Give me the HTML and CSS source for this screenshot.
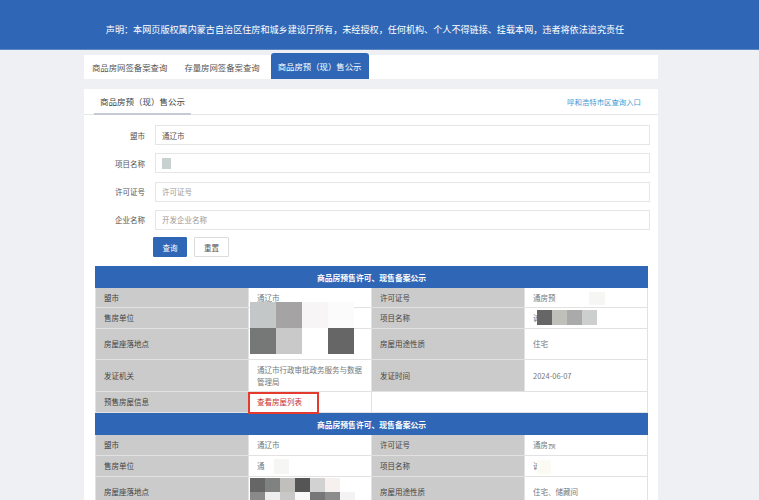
FILE: index.html
```html
<!DOCTYPE html>
<html lang="zh-CN">
<head>
<meta charset="utf-8">
<title>商品房预（现）售公示</title>
<link rel="stylesheet" href="styles.css">
</head>
<body>
<div class="banner"><p class="banner-text">声明：本网页版权属内蒙古自治区住房和城乡建设厅所有，未经授权，任何机构、个人不得链接、挂载本网，违者将依法追究责任</p></div>
<div class="page">
  <div class="tabs">
    <div class="tab">商品房网签备案查询</div>
    <div class="tab">存量房网签备案查询</div>
    <div class="tab active">商品房预（现）售公示</div>
  </div>
  <div class="card">
    <div class="card-head">
      <div class="card-title">商品房预（现）售公示</div>
      <a class="card-link">呼和浩特市区查询入口</a>
    </div>
    <div class="form">
      <div class="row"><label>盟市</label><div class="field"><input value="通辽市"></div></div>
      <div class="row"><label>项目名称</label><div class="field"><input value=""><span class="blur-dot"></span></div></div>
      <div class="row"><label>许可证号</label><div class="field"><input placeholder="许可证号"></div></div>
      <div class="row"><label>企业名称</label><div class="field"><input placeholder="开发企业名称"></div></div>
      <div class="btns"><button class="btn primary">查询</button><button class="btn">重置</button></div>
    </div>

    <table class="tbl">
      <colgroup><col class="ck"><col class="cv"><col class="ck"><col class="cv"></colgroup>
      <tr><th colspan="4">商品房预售许可、现售备案公示</th></tr>
      <tr class="h20"><td class="k">盟市</td><td class="v">通辽市</td><td class="k">许可证号</td><td class="v rel">通房预<span class="faint f1"></span></td></tr>
      <tr class="h21"><td class="k">售房单位</td><td class="v rel"><div class="mosaic m1"><i style="background:#c4c7c8"></i><i style="background:#a5a3a3"></i><i style="background:#f7f5f5"></i><i style="background:#fbfbfb"></i><i style="background:#767877"></i><i style="background:#c9c9c9"></i><i style="background:#ffffff"></i><i style="background:#666666"></i></div></td><td class="k">项目名称</td><td class="v rel">诚<div class="mosaic m2"><i style="background:#666666"></i><i style="background:#c0c0bb"></i><i style="background:#aaaaaa"></i><i style="background:#cdcfcf"></i></div></td></tr>
      <tr class="h31"><td class="k">房屋座落地点</td><td class="v"></td><td class="k">房屋用途性质</td><td class="v">住宅</td></tr>
      <tr class="h32"><td class="k">发证机关</td><td class="v">通辽市行政审批政务服务与数据管理局</td><td class="k">发证时间</td><td class="v">2024-06-07</td></tr>
      <tr class="h21"><td class="k">预售房屋信息</td><td class="v rel"><a class="red">查看房屋列表</a><span class="mark"></span></td><td class="blank" colspan="2"></td></tr>
    </table>

    <table class="tbl">
      <colgroup><col class="ck"><col class="cv"><col class="ck"><col class="cv"></colgroup>
      <tr><th colspan="4">商品房预售许可、现售备案公示</th></tr>
      <tr class="h21"><td class="k">盟市</td><td class="v">通辽市</td><td class="k">许可证号</td><td class="v rel">通房预<span class="faint f2"></span></td></tr>
      <tr class="h21"><td class="k">售房单位</td><td class="v rel">通<span class="faint f3"></span></td><td class="k">项目名称</td><td class="v rel">诚<span class="faint f4"></span></td></tr>
      <tr class="h31"><td class="k">房屋座落地点</td><td class="v rel"><div class="mosaic m3"><i style="background:#666666"></i><i style="background:#808282"></i><i style="background:#c0bfbc"></i><i style="background:#555555"></i><i style="background:#d2d2d2"></i><i style="background:#f6f0ee"></i><i style="background:#ffffff"></i><i style="background:#8a8a8a"></i><i style="background:#eeeeee"></i><i style="background:#c8c8c8"></i><i style="background:#f8f8f8"></i><i style="background:#777777"></i><i style="background:#8c8c8c"></i><i style="background:#f3f3f3"></i></div></td><td class="k">房屋用途性质</td><td class="v">住宅、储藏间</td></tr>
    </table>
  </div>
</div>
</body>
</html>
```

FILE: styles.css
```css
* { box-sizing: border-box; }
html, body { margin: 0; padding: 0; }
body {
  background: #eef0f3;
  font-family: "Noto Sans CJK SC", "Noto Sans", sans-serif;
  color: #333;
  overflow: hidden;
  height: 500px;
}
.banner {
  height: 50px;
  background: #2f67b6;
  border-bottom: 1px solid #5b86c4;
  padding: 21px 29px 0 0;
}
.banner-text {
  margin: 0;
  color: #fff;
  font-size: 9.1px;
  line-height: 16px;
  text-align: center;
  white-space: nowrap;
}
.page {
  width: 574px;
  margin-left: 84px;
}
.tabs {
  margin-top: 5px;
  height: 24px;
  background: #fff;
  display: flex;
  gap: 1px;
  font-size: 8.4px;
  color: #555;
}
.tab {
  padding: 0 8px;
  display: flex;
  align-items: center;
  height: 24px;
}
.tab.active {
  margin-left: 2px;
  margin-top: -2px;
  height: 26px;
  background: #2f67b6;
  color: #fff;
  border-radius: 3px 3px 0 0;
  padding: 0 7px;
}
.card {
  margin-top: 10px;
  background: #fff;
  padding-bottom: 20px;
}
.card-head {
  height: 26px;
  border-bottom: 1px solid #e6e6e6;
  display: flex;
  justify-content: space-between;
  align-items: stretch;
  padding: 0 17px 0 10px;
}
.card-title {
  font-size: 8.5px;
  color: #444;
  padding: 0 6px;
  display: flex;
  align-items: center;
  border-bottom: 2px solid #c5cbd3;
  margin-bottom: -1px;
}
.card-link {
  font-size: 7.4px;
  color: #3d9ad6;
  display: flex;
  align-items: center;
}
.form {
  padding: 10px 8px 0 0;
}
.row {
  display: flex;
  align-items: center;
  margin-bottom: 8.3px;
}
.row label {
  width: 61px;
  text-align: right;
  font-size: 7.5px;
  color: #555;
  margin-right: 10px;
}
.field {
  flex: 1;
  position: relative;
}
.field input {
  width: 100%;
  height: 20px;
  border: 1px solid #e6e6e6;
  padding: 0 6px;
  font-family: inherit;
  font-size: 7.5px;
  color: #555;
  outline: none;
  display: block;
}
.field input::placeholder { color: #999; }
.blur-dot {
  position: absolute;
  left: 7px;
  top: 5px;
  width: 9px;
  height: 11px;
  background: #c6d1d0;
}
.btns {
  display: flex;
  gap: 7px;
  margin-left: 69px;
  margin-top: -1px;
}
.btn {
  height: 20px;
  width: 35px;
  border: 1px solid #dcdcdc;
  background: #fff;
  font-family: inherit;
  font-size: 7.5px;
  color: #555;
  padding: 0;
  border-radius: 1px;
}
.btn.primary {
  background: #2f67b6;
  border-color: #2f67b6;
  color: #fff;
  width: 34px;
}
.tbl {
  margin-left: 11px;
  width: 552px;
  border-collapse: collapse;
  table-layout: fixed;
  font-size: 7.5px;
}
.form + .tbl { margin-top: 9px; }
.tbl col.ck { width: 153px; }
.tbl col.cv { width: 123px; }
.tbl th {
  background: #2f67b6;
  color: #fff;
  font-weight: bold;
  font-size: 7.8px;
  height: 21px;
  padding: 0;
  border: 1px solid #2f67b6;
}
.tbl td {
  border: 1px solid #e2e2e2;
  padding: 0 8px;
  line-height: 11.5px;
  vertical-align: middle;
}
.tbl td.k {
  background: #cbcbcb;
  color: #444;
}
.tbl td.v {
  background: #fff;
  color: #777;
}
.tbl td.blank { background: #fff; }
.h20 td { height: 20px; }
.h21 td { height: 21px; }
.h31 td { height: 31px; }
.h32 td { height: 32px; }
.rel { position: relative; }
.mosaic {
  position: absolute;
  display: grid;
}
.mosaic i { display: block; }
.m1 {
  left: 1px;
  top: -6px;
  grid-template-columns: repeat(4, 26px);
  grid-auto-rows: 26px;
}
.m2 {
  left: 12px;
  top: 2px;
  grid-template-columns: repeat(4, 15px);
  grid-auto-rows: 15px;
}
.m3 {
  left: 1px;
  top: 1px;
  grid-template-columns: repeat(7, 15px);
  grid-auto-rows: 14px;
}
.faint {
  position: absolute;
  display: block;
  background: #f6f6f4;
}
.f1 { left: 64px; top: 4px; width: 16px; height: 13px; }
.f2 { left: 22px; top: 0; width: 100px; height: 9px; background: #ffffff; }
.f3 { left: 25px; top: 3px; width: 15px; height: 15px; }
.f4 { left: 12px; top: 4px; width: 14px; height: 14px; background: #fbfbf3; }
.red { color: #c9302c; }
.mark {
  position: absolute;
  left: -1px;
  top: 0;
  width: 71px;
  height: 22px;
  border: 2px solid #e53a2e;
}
```
